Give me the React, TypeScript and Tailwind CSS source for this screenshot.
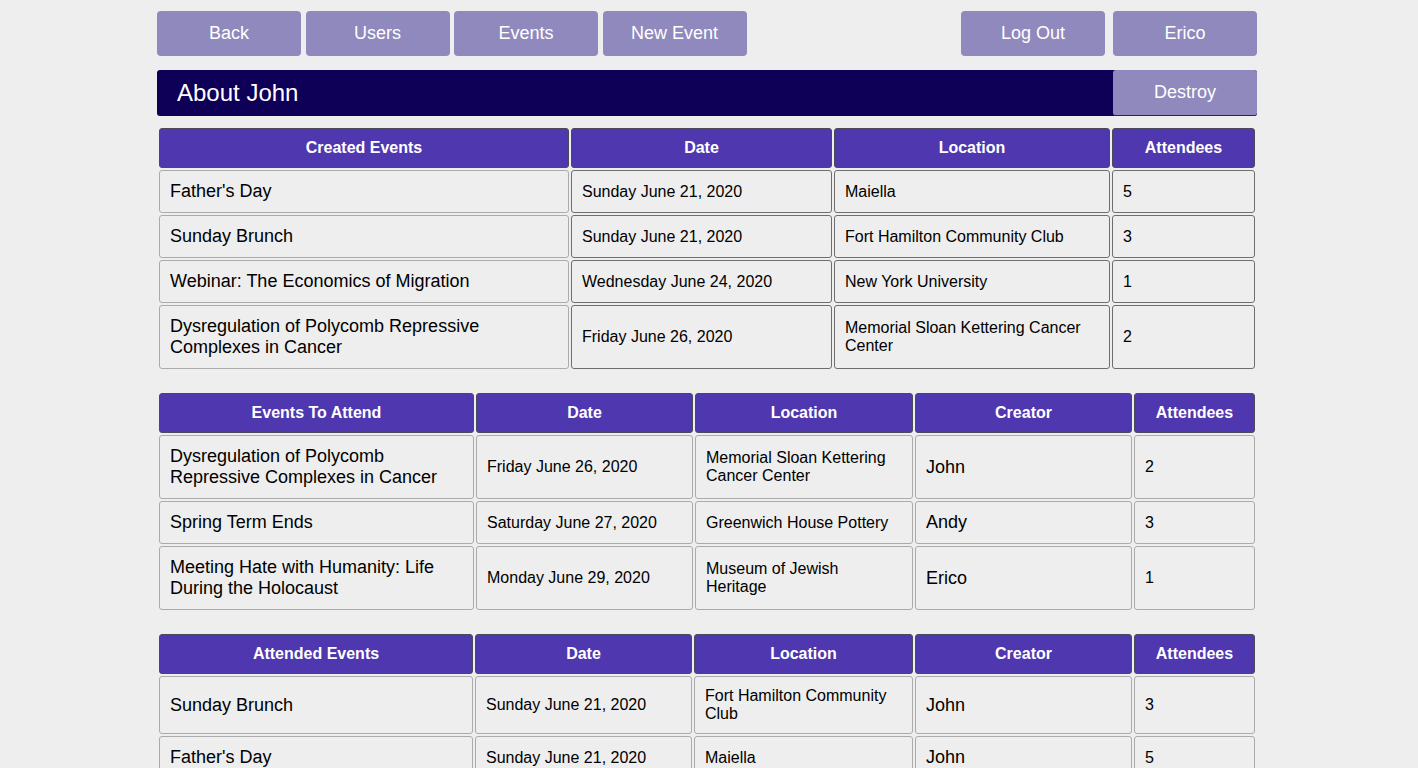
import React from 'react';

type Col = { label: string; width: string; big?: boolean; dark?: boolean };

const created: Col[] = [
  { label: 'Created Events', width: 'w-[410px]', big: true },
  { label: 'Date', width: 'w-[261px]', dark: true },
  { label: 'Location', width: 'w-[276px]', dark: true },
  { label: 'Attendees', width: 'w-[143px]', dark: true },
];

const createdRows = [
  ["Father's Day", 'Sunday June 21, 2020', 'Maiella', '5'],
  ['Sunday Brunch', 'Sunday June 21, 2020', 'Fort Hamilton Community Club', '3'],
  ['Webinar: The Economics of Migration', 'Wednesday June 24, 2020', 'New York University', '1'],
  ['Dysregulation of Polycomb Repressive Complexes in Cancer', 'Friday June 26, 2020', 'Memorial Sloan Kettering Cancer Center', '2'],
];

const toAttend: Col[] = [
  { label: 'Events To Attend', width: 'w-[315px]', big: true },
  { label: 'Date', width: 'w-[217px]' },
  { label: 'Location', width: 'w-[218px]' },
  { label: 'Creator', width: 'w-[217px]', big: true },
  { label: 'Attendees', width: 'w-[121px]' },
];

const toAttendRows = [
  ['Dysregulation of Polycomb Repressive Complexes in Cancer', 'Friday June 26, 2020', 'Memorial Sloan Kettering Cancer Center', 'John', '2'],
  ['Spring Term Ends', 'Saturday June 27, 2020', 'Greenwich House Pottery', 'Andy', '3'],
  ['Meeting Hate with Humanity: Life During the Holocaust', 'Monday June 29, 2020', 'Museum of Jewish Heritage', 'Erico', '1'],
];

const attended: Col[] = [
  { label: 'Attended Events', width: 'w-[314px]', big: true },
  { label: 'Date', width: 'w-[217px]' },
  { label: 'Location', width: 'w-[219px]' },
  { label: 'Creator', width: 'w-[217px]', big: true },
  { label: 'Attendees', width: 'w-[121px]' },
];

const attendedRows = [
  ['Sunday Brunch', 'Sunday June 21, 2020', 'Fort Hamilton Community Club', 'John', '3'],
  ["Father's Day", 'Sunday June 21, 2020', 'Maiella', 'John', '5'],
];

function EventTable({ cols, rows }: { cols: Col[]; rows: string[][] }) {
  return (
    <table className="w-full table-fixed border-separate border-spacing-[2px] mb-[20px]">
      <thead>
        <tr>
          {cols.map((c) => (
            <th
              key={c.label}
              className={`${c.width} bg-[#4f37b0] border border-[#4a4a5a] rounded-[3px] p-2.5 text-white text-[16px] font-bold leading-[18px]`}
            >
              {c.label}
            </th>
          ))}
        </tr>
      </thead>
      <tbody>
        {rows.map((r, i) => (
          <tr key={i}>
            {r.map((v, j) => (
              <td
                key={j}
                className={`border rounded-[3px] p-2.5 align-middle text-left text-black ${
                  cols[j].dark ? 'border-[#6e6e6e]' : 'border-[#ababab]'
                } ${cols[j].big ? 'text-[18px] leading-[21px]' : 'text-[16px] leading-[18px]'}`}
              >
                {v}
              </td>
            ))}
          </tr>
        ))}
      </tbody>
    </table>
  );
}

function NavButton({ children }: { children: React.ReactNode }) {
  return (
    <button
      type="button"
      className="w-[144px] h-[45px] rounded-[4px] bg-[#8f89bd] text-white text-[18px]"
    >
      {children}
    </button>
  );
}

export default function App() {
  return (
    <div
      className="min-h-screen bg-[#eeeeee] text-black"
      style={{ fontFamily: '"Liberation Sans", Arial, sans-serif' }}
    >
      <div className="w-[1100px] ml-[157px] pt-[11px]">
        <div className="flex justify-between">
          <div className="flex gap-[4.5px]">
            <NavButton>Back</NavButton>
            <NavButton>Users</NavButton>
            <NavButton>Events</NavButton>
            <NavButton>New Event</NavButton>
          </div>
          <div className="flex gap-[8px]">
            <NavButton>Log Out</NavButton>
            <NavButton>Erico</NavButton>
          </div>
        </div>

        <div className="mt-[14px] h-[46px] flex items-center justify-between bg-[#0e0057] rounded-[3px]">
          <h1 className="pl-5 text-white text-[24px]">About John</h1>
          <button
            type="button"
            className="w-[144px] h-[46px] rounded-[3px] bg-[#8f89bd] border-b border-[#2a1f6e] text-white text-[18px]"
          >
            Destroy
          </button>
        </div>

        <div className="mt-[10px]">
          <EventTable cols={created} rows={createdRows} />
          <EventTable cols={toAttend} rows={toAttendRows} />
          <EventTable cols={attended} rows={attendedRows} />
        </div>
      </div>
    </div>
  );
}
